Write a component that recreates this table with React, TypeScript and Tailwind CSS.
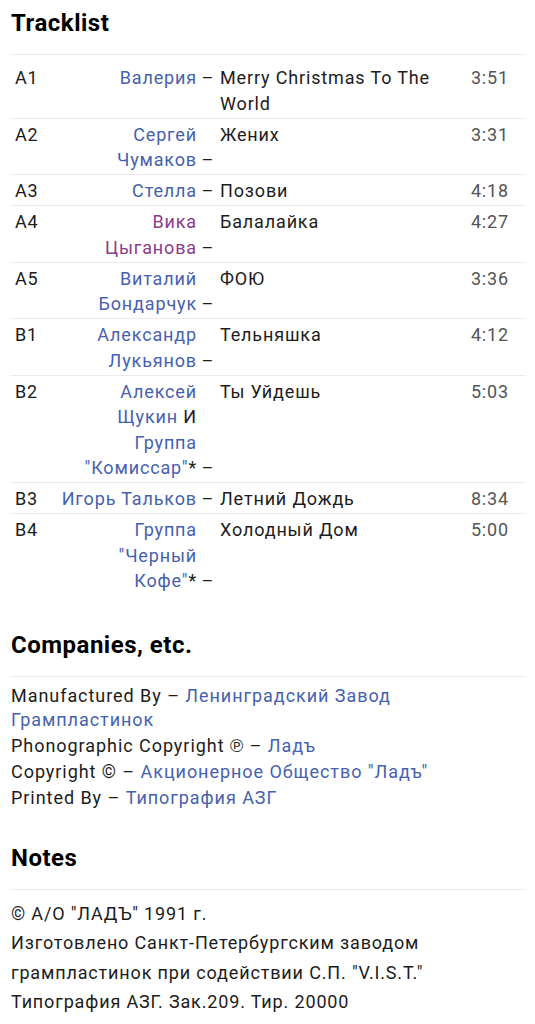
import React from "react";

type Part = { t: string; link?: boolean; visited?: boolean };
type Track = { pos: string; artist: Part[]; title: string; dur: string };

const tracks: Track[] = [
  { pos: "A1", artist: [{ t: "Валерия", link: true }], title: "Merry Christmas To The World", dur: "3:51" },
  { pos: "A2", artist: [{ t: "Сергей Чумаков", link: true }], title: "Жених", dur: "3:31" },
  { pos: "A3", artist: [{ t: "Стелла", link: true }], title: "Позови", dur: "4:18" },
  { pos: "A4", artist: [{ t: "Вика Цыганова", link: true, visited: true }], title: "Балалайка", dur: "4:27" },
  { pos: "A5", artist: [{ t: "Виталий Бондарчук", link: true }], title: "ФОЮ", dur: "3:36" },
  { pos: "B1", artist: [{ t: "Александр Лукьянов", link: true }], title: "Тельняшка", dur: "4:12" },
  {
    pos: "B2",
    artist: [
      { t: "Алексей Щукин", link: true },
      { t: " И " },
      { t: 'Группа "Комиссар"', link: true },
      { t: "*" },
    ],
    title: "Ты Уйдешь",
    dur: "5:03",
  },
  { pos: "B3", artist: [{ t: "Игорь Тальков", link: true }], title: "Летний Дождь", dur: "8:34" },
  {
    pos: "B4",
    artist: [{ t: 'Группа "Черный Кофе"', link: true }, { t: "*" }],
    title: "Холодный Дом",
    dur: "5:00",
  },
];

const Heading = ({ children, className = "" }: { children: React.ReactNode; className?: string }) => (
  <h2
    className={`text-[24px] font-bold leading-[30px] tracking-[0.5px] text-black pt-2 pb-4 border-b border-[#e9e9e9] ${className}`}
  >
    {children}
  </h2>
);

const Link = ({ children }: { children: React.ReactNode }) => (
  <a className="text-[#4661b0]">{children}</a>
);

export default function App() {
  return (
    <div className="font-['Roboto',sans-serif] text-[18px] tracking-[0.85px] text-[#1c1c1c] bg-white pl-[11px] pr-[10px] pb-6">
      <Heading>Tracklist</Heading>
      <div className="mt-[7px] divide-y divide-[#e9e9e9]">
        {tracks.map((tr) => (
          <div key={tr.pos} className="flex pt-[3px] pb-[1.5px] leading-[25.5px]">
            <div className="w-[48px] shrink-0 pl-1">{tr.pos}</div>
            <div className="w-[153px] shrink-0 pr-[15px] text-right">
              {tr.artist.map((p, i) =>
                p.link ? (
                  <a key={i} className={p.visited ? "text-[#8a3b8c]" : "text-[#4661b0]"}>
                    {p.t}
                  </a>
                ) : (
                  <span key={i}>{p.t}</span>
                )
              )}
              <span className="inline-block w-0 whitespace-nowrap text-left tracking-normal">{"\u00a0–"}</span>
            </div>
            <div className="flex-1 pl-2">{tr.title}</div>
            <div className="w-[70px] shrink-0 pr-[16px] text-right text-[#555]">{tr.dur}</div>
          </div>
        ))}
      </div>

      <Heading className="mt-[27px]">Companies, etc.</Heading>
      <ul className="mt-[6px] leading-[24px] tracking-[0.95px]">
        <li className="py-px">
          Manufactured By – <Link>Ленинградский Завод Грампластинок</Link>
        </li>
        <li className="py-px">
          Phonographic Copyright ℗ – <Link>Ладъ</Link>
        </li>
        <li className="py-px">
          Copyright © – <Link>Акционерное Общество "Ладъ"</Link>
        </li>
        <li className="py-px">
          Printed By – <Link>Типография АЗГ</Link>
        </li>
      </ul>

      <Heading className="mt-[24px]">Notes</Heading>
      <p className="pt-[9px] leading-[29.3px]">
        © А/О "ЛАДЪ" 1991 г.
        <br />
        Изготовлено Санкт-Петербургским заводом
        <br />
        грампластинок при содействии С.П. "V.I.S.T."
        <br />
        Типография АЗГ. Зак.209. Тир. 20000
      </p>
    </div>
  );
}
